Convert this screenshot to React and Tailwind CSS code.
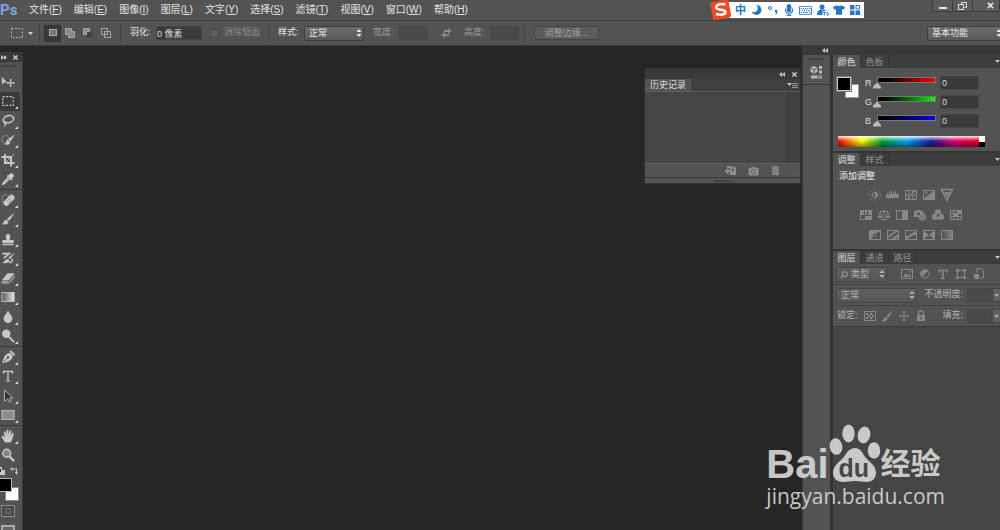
import { FaMoon, FaMicrophone, FaRegKeyboard, FaTshirt, FaCamera, FaTrashAlt } from 'react-icons/fa';

const uiFont = "font-['Liberation_Sans','Noto_Sans_CJK_SC',sans-serif]";
const fieldClass = 'border border-[#464646] bg-[#3a3a3a] text-[#dcdcdc] outline-none';
const fieldOffClass = 'border border-[#474747] bg-[#4a4a4a] outline-none';

const menus = [
  ['文件', 'F'],
  ['编辑', 'E'],
  ['图像', 'I'],
  ['图层', 'L'],
  ['文字', 'Y'],
  ['选择', 'S'],
  ['滤镜', 'T'],
  ['视图', 'V'],
  ['窗口', 'W'],
  ['帮助', 'H'],
];

const toolIcons = {
  move: (
    <>
      <path d="M1 2v9l2.500-2.500H7z" fill="currentColor" />
      <path d="M11 5v8M7 9h8M10 6l1-1 1 1M10 12l1 1 1-1M8 8L7 9l1 1M14 8l1 1-1 1" fill="none" stroke="currentColor" strokeWidth="1.200" />
    </>
  ),
  marquee: <rect x="2" y="3" width="12" height="10" fill="none" stroke="currentColor" strokeWidth="1.300" strokeDasharray="2.400 1.600" />,
  lasso: (
    <>
      <ellipse cx="8.500" cy="6" rx="6" ry="4" transform="rotate(-14 8.500 6)" fill="none" stroke="currentColor" strokeWidth="1.800" />
      <path d="M3.500 8.500c-1 1.500.2 2.600 1.500 1.800s-.2-2-1-1.400M5 10.500c.6 1.500-.2 3-1.600 3.500" fill="none" stroke="currentColor" strokeWidth="1.300" />
    </>
  ),
  quickSelect: (
    <>
      <circle cx="5.500" cy="7.500" r="4.500" fill="none" stroke="currentColor" strokeDasharray="1.500 1.300" />
      <path d="M16 1.500L11 9.500 8 7z" fill="currentColor" />
      <path d="M7.500 7.500L10.500 10.500c-.5 3-3.500 3.500-6.500 2.500C6.500 12 5.500 8.500 7.500 7.500z" fill="currentColor" />
    </>
  ),
  crop: (
    <>
      <path d="M4.500 1v10.500H15.500M.5 4.500h11V15.500" fill="none" stroke="currentColor" strokeWidth="2.200" />
      <path d="M5 11L14.500 1.500" stroke="currentColor" />
    </>
  ),
  eyedropper: (
    <>
      <path d="M9.500 2.500c2-2.500 6-.5 5 2.500L12.500 7.500l.8.8-1.500 1.500L6.500 4.500 8 3l1 1z" fill="currentColor" />
      <path d="M8.500 6l-5.500 6-1.500 2.500L4 13l6-5.500" fill="none" stroke="currentColor" strokeWidth="1.500" />
    </>
  ),
  heal: (
    <>
      <ellipse cx="5.500" cy="7" rx="4.500" ry="5" fill="none" stroke="currentColor" strokeDasharray="1.500 1.200" />
      <rect x="1.500" y="5" width="15" height="6.500" rx="3" transform="rotate(-45 9 8)" fill="currentColor" />
      <path d="M7 8.500l3 3M9 6.500l3 3" stroke="#666" strokeWidth=".8" />
    </>
  ),
  brush: (
    <>
      <path d="M16 .5L9.500 10 6.500 8z" fill="currentColor" />
      <path d="M6 8.800l2.700 2.200c-.5 3-4 4-8.200 2.800C3.500 13 3 9.500 6 8.800z" fill="currentColor" />
    </>
  ),
  stamp: <path d="M6 7.500C3 .5 13 .5 10 7.500V9h4.500v3.500h-13V9H6zM1.500 13.300h13V15h-13z" fill="currentColor" />,
  history: (
    <>
      <path d="M16 1.500L10.500 9.500 8 8z" fill="currentColor" />
      <path d="M7.500 9l2.500 2c-.5 2.500-4.500 3.500-9 2.500C3.500 13 4.500 9.500 7.500 9z" fill="currentColor" />
      <path d="M1.500 3h8L3 8.500M12.500 9c1 2-.5 4-3 4.500" fill="none" stroke="currentColor" strokeWidth="1.800" />
    </>
  ),
  eraser: (
    <>
      <path d="M7.500 2.500h8L9 10.500H1z" fill="currentColor" />
      <path d="M1 11.200h8v3.300H1zM10 11l5.500-7v3.500L10 14.500z" fill="#9b9b9b" />
    </>
  ),
  gradient: (
    <>
      <defs>
        <linearGradient id="tool-ramp">
          <stop stopColor="#555" />
          <stop offset="1" stopColor="#e4e4e4" />
        </linearGradient>
      </defs>
      <rect x="1" y="3" width="14" height="10" fill="url(#tool-ramp)" stroke="#cfcfcf" />
    </>
  ),
  blur: <path d="M8 .5c1 3.500 5 5.500 5 9.300a5 5 0 0 1-10 0C3 6 7 4 8 .5z" fill="currentColor" />,
  dodge: (
    <>
      <circle cx="6" cy="5.500" r="4.800" fill="currentColor" />
      <path d="M9 9l6 6" stroke="currentColor" strokeWidth="2.200" />
    </>
  ),
  pen: (
    <>
      <path d="M10 3l3.500 3.500c-1 5-4 7-12 8.500C3 8 5 4 10 3z" fill="currentColor" />
      <path d="M10.500 1L15.500 6" stroke="currentColor" strokeWidth="2.200" />
      <path d="M3 14l4.500-5" stroke="#444" />
      <circle cx="8" cy="8.500" r="1.300" fill="#444" />
    </>
  ),
  type: <path d="M2 2h12v3.500h-1c-.3-1.500-1-2.200-4.200-2.200V13l1.700.5v.8h-5v-.8l1.700-.5V3.300C4 3.300 3.300 4 3 5.500H2z" fill="currentColor" />,
  pathSelect: <path d="M4 1v13l3.500-2.700 2 4 2-1-2-4h4z" fill="#333" stroke="#bdbdbd" />,
  rect: <rect x="1" y="3" width="14" height="10" fill="#8b8b8b" stroke="#c8c8c8" />,
  hand: <path d="M4.500 15L1 9.500c-.5-1.500 1-1.800 1.800-.8L4.500 10 3.500 4c0-1.300 1.500-1.300 1.700 0L6.200 8l.3-6c.2-1.300 1.600-1.300 1.700 0L8.500 8l1.500-5.500c.4-1.200 1.700-.9 1.500.4L10.800 8.500l1.900-3.500c.7-1 1.900-.4 1.500.7L12.500 12l-1.500 3z" fill="currentColor" stroke="currentColor" strokeWidth=".6" />,
  zoom: (
    <>
      <circle cx="6.500" cy="6" r="4.500" fill="#858585" stroke="currentColor" strokeWidth="1.600" />
      <path d="M9.500 9.500L15 15" stroke="currentColor" strokeWidth="2.600" />
    </>
  ),
};

const toolGroups = [
  {
    height: 'h-[117px]',
    tools: [
      ['move', '移动工具'],
      ['marquee', '矩形选框工具'],
      ['lasso', '套索工具'],
      ['quickSelect', '快速选择工具'],
      ['crop', '裁剪工具'],
      ['eyedropper', '吸管工具'],
    ],
  },
  {
    height: 'h-[156px]',
    tools: [
      ['heal', '污点修复画笔工具'],
      ['brush', '画笔工具'],
      ['stamp', '仿制图章工具'],
      ['history', '历史记录画笔工具'],
      ['eraser', '橡皮擦工具'],
      ['gradient', '渐变工具'],
      ['blur', '模糊工具'],
      ['dodge', '减淡工具'],
    ],
  },
  {
    height: 'h-[78px]',
    tools: [
      ['pen', '钢笔工具'],
      ['type', '文字工具'],
      ['pathSelect', '路径选择工具'],
      ['rect', '矩形工具'],
    ],
  },
  {
    height: 'h-[39px]',
    tools: [
      ['hand', '抓手工具'],
      ['zoom', '缩放工具'],
    ],
  },
];

const channels = [
  { name: 'R', bar: 'bg-linear-to-r from-black to-[#ff0000]' },
  { name: 'G', bar: 'bg-linear-to-r from-black to-[#00ff00]' },
  { name: 'B', bar: 'bg-linear-to-r from-black to-[#0000ff]' },
];

const frame = <rect x="1.500" y="2.500" width="11" height="9" fill="none" stroke="currentColor" />;

const adjustments = [
  [
    ['亮度/对比度', <><circle cx="7" cy="7" r="2.800" fill="none" stroke="currentColor" /><path d="M7 4.200a2.800 2.800 0 0 1 0 5.600z" fill="currentColor" /><path d="M7 .5v2M7 11.500v2M.5 7h2M11.500 7h2M2.500 2.500l1.300 1.300M10.200 10.200l1.300 1.300M2.500 11.500l1.300-1.300M10.200 3.800l1.300-1.300" stroke="currentColor" /></>],
    ['色阶', <path d="M0 10V7h1V5h1v2h1V4h1v2h1V3h1v3h1V4h1v2h1V3h1v3h1V5h1v2h1v3z" fill="currentColor" />],
    ['曲线', <>{frame}<path d="M2 11C8 11 6 3 12 3M5 3v8M9 3v8M2 7h10" fill="none" stroke="currentColor" /></>],
    ['曝光度', <>{frame}<path d="M2 11L12 3v8zM3 5h3M4.500 3.500v3" fill="currentColor" stroke="currentColor" strokeWidth=".8" /></>],
    ['自然饱和度', <><path d="M1.500 1.500h11L7 12.500z" fill="none" stroke="currentColor" strokeWidth="1.500" /><path d="M4 4h6L7 10z" fill="currentColor" /></>],
  ],
  [
    ['色相/饱和度', <>{frame}<path d="M2 3h3v4H2zM6 3h2v4H6zM9 3h3v4H9zM6 8h6v3H6z" fill="currentColor" /></>],
    ['色彩平衡', <path d="M7 1.500v9M3 3.500h8M4 11.500h6M3 4l-2 4.500h4zM11 4L9 8.500h4zM1 9.500h4M9 9.500h4" fill="none" stroke="currentColor" />],
    ['黑白', <>{frame}<path d="M7 3h5.500v8.500H7z" fill="currentColor" /></>],
    ['照片滤镜', <><path d="M1 3h2l1-1h3l1 1h2v6H1z" fill="currentColor" /><circle cx="5.500" cy="5.800" r="1.600" fill="#535353" /><circle cx="9.500" cy="9" r="3.300" fill="#777" stroke="currentColor" /></>],
    ['通道混合器', <><circle cx="7" cy="4.500" r="3.300" fill="currentColor" /><circle cx="4.300" cy="8.800" r="3.300" fill="currentColor" /><circle cx="9.700" cy="8.800" r="3.300" fill="currentColor" /><path d="M7 5l2 3.500H5z" fill="#535353" /></>],
    ['颜色查找', <>{frame}<path d="M4.500 2.500v9M8.500 2.500v9M1.500 5.500h11M1.500 8.500h11" stroke="currentColor" /><path d="M5 6h3v2H5zM9 3h3v2H9z" fill="currentColor" /></>],
  ],
  [
    ['反相', <>{frame}<path d="M2 11V3h10l-4 2.500A2.500 2.500 0 0 0 5 9z" fill="currentColor" /><path d="M9 6a2.500 2.500 0 0 1-3 3z" fill="currentColor" /></>],
    ['色调分离', <>{frame}<path d="M2 8l7-5h3L2 10zM5 11l7-5v3l-3 2z" fill="currentColor" /></>],
    ['阈值', <>{frame}<path d="M2 8c3 1 5-4 10-4v3c-4-.5-6 3-10 4z" fill="currentColor" /></>],
    ['可选颜色', <>{frame}<path d="M2 3v8l5-4zM12 3v8L7 7z" fill="currentColor" /></>],
    ['渐变映射', <><defs><linearGradient id="map-ramp"><stop stopColor="#505050" /><stop offset="1" stopColor="#858585" /></linearGradient></defs><rect x="1.500" y="2.500" width="11" height="9" fill="url(#map-ramp)" stroke="currentColor" /></>],
  ],
];

const layerFilters = [
  ['像素图层', <>{frame}<path d="M3 10l2.500-4 2 2.500L9 7l2 3z" fill="currentColor" /><path d="M9 4h2v1.500H9z" fill="currentColor" /></>],
  ['调整图层', <><circle cx="7" cy="7" r="4.500" fill="currentColor" /><path d="M10.200 3.800a4.500 4.500 0 0 1-6.400 6.400z" fill="#565656" /><circle cx="7" cy="7" r="4.200" fill="none" stroke="currentColor" /></>],
  ['文字图层', <path d="M2.500 2.500h9v3h-1c-.3-1.300-.7-1.800-2.700-1.800V11l1.400.3v.7H4.800v-.7L6.200 11V3.700C4.200 3.700 3.800 4.200 3.500 5.500h-1z" fill="currentColor" />],
  ['形状图层', <path d="M3.500 3.500h7v7h-7zM2.500 2.500h2v2h-2zM9.500 2.500h2v2h-2zM2.500 9.500h2v2h-2zM9.500 9.500h2v2h-2z" fill="none" stroke="currentColor" />],
  ['智能对象', <><path d="M5 6V1.500h4L11.500 4v7H8" fill="none" stroke="currentColor" /><path d="M2 7h5v5H2z" fill="currentColor" /></>],
];

const locks = [
  ['锁定透明像素', <>{frame}<path d="M3 4h2v2H3zM7 4h2v2H7zM5 6h2v2H5zM9 6h2v2H9zM3 8h2v2H3zM7 8h2v2H7z" fill="currentColor" /></>],
  ['锁定图像像素', <><path d="M13.500 1L8 9 6 7.300z" fill="currentColor" /><path d="M5.500 8l2 1.700C7 12.500 4 13 1 12c2.500-.5 2.500-3.500 4.500-4z" fill="currentColor" /></>],
  ['锁定位置', <path d="M7 2v10M2 7h10M5.500 3.500L7 2l1.500 1.500M5.500 10.500L7 12l1.500-1.500M3.500 5.500L2 7l1.500 1.500M10.500 5.500L12 7l-1.500 1.500" fill="none" stroke="currentColor" />],
  ['锁定全部', <><path d="M4.500 6.500V4.500a2.500 2.500 0 0 1 5 0v2" fill="none" stroke="currentColor" strokeWidth="1.400" /><path d="M3 6h8v6H3zM6.300 8v2.500h1.400V8z" fill="currentColor" fillRule="evenodd" /></>],
];

function SmallIcon({ label, width = 'w-[18px]', children }) {
  return (
    <button type="button" aria-label={label} className={`flex items-center justify-center text-[#888] ${width}`}>
      <svg viewBox="0 0 14 14" className="h-3.5 w-3.5 shrink-0">{children}</svg>
    </button>
  );
}

function UpDown() {
  return (
    <svg viewBox="0 0 6 8" className="pointer-events-none absolute inset-y-0 right-0.5 my-auto h-2 w-1.5">
      <path d="M3 0l2.500 3h-5zM3 8L.5 5h5z" fill="currentColor" />
    </svg>
  );
}

function Picker({ label, value, className, pad = 'pl-1', dim }) {
  const tone = dim
    ? 'text-[#b4b4b4] [&>select]:border-[#454545] [&>select]:from-[#606060] [&>select]:to-[#565656]'
    : 'text-[#e6e6e6] [&>select]:border-[#3d3d3d] [&>select]:from-[#6c6c6c] [&>select]:to-[#5a5a5a]';
  return (
    <div className={`relative shrink-0 ${tone} ${className}`}>
      <select
        aria-label={label}
        className={`block h-full w-full appearance-none rounded-xs border bg-linear-to-b text-[9px] leading-3 outline-none ${pad}`}
      >
        <option>{value}</option>
      </select>
      <UpDown />
    </div>
  );
}

function Chevrons({ flip }) {
  return (
    <svg viewBox="0 0 6 5" className={`h-[5px] w-1.5 ${flip ? 'rotate-180' : ''}`}>
      <path d="M3 0v5L0 2.500zM6 0v5L3 2.500z" fill="#c4c4c4" />
    </svg>
  );
}

function Cross() {
  return (
    <svg viewBox="0 0 6 6" className="h-[5px] w-[5px]">
      <path d="M.5.5l5 5M5.500.5l-5 5" stroke="#d0d0d0" strokeWidth="1.500" />
    </svg>
  );
}

function Grip() {
  return <div className="h-0.5 w-[15px] border-y border-dotted border-[#333]" />;
}

function Divider() {
  return <div className="mx-[5px] h-[17px] w-px shrink-0 bg-[#404040]" />;
}

function TabBar({ tabs }) {
  return (
    <div className="flex h-[13px] items-stretch bg-[#3d3d3d] text-[9px] leading-3">
      {tabs.map((tab, i) => (
        <button
          key={tab}
          type="button"
          className={`w-7 border-r border-[#333] text-center ${i === 0 ? 'bg-[#535353] text-[#dedede]' : 'text-[#929292]'}`}
        >
          {tab}
        </button>
      ))}
      <button type="button" aria-label="面板菜单" className="ml-auto flex w-[5px] items-center overflow-hidden">
        <svg viewBox="0 0 5 3" className="h-[3px] w-[5px]"><path d="M0 0h5L2.500 3z" fill="#c4c4c4" /></svg>
      </button>
    </div>
  );
}

function InputMethodBar() {
  return (
    <div className="mr-[68px] ml-auto flex items-center">
      <svg viewBox="0 0 22 20" className="z-10 h-5 w-[22px]">
        <rect x="1.500" y=".5" width="18.500" height="18.500" rx="2.500" transform="rotate(-10 11 10)" fill="#ef4b23" />
        <path d="M15.500 4.500C11 3.300 6 4.300 6.200 7.500c.3 3.500 9.300 1 9.300 4.500 0 2.800-5.500 3.300-9.500 2" fill="none" stroke="#fff" strokeWidth="2.500" />
      </svg>
      <div className="-ml-1 flex h-4 items-center bg-white pr-px pl-1 text-[#2475c4]">
        <span className="w-[17px] text-center text-[11px] leading-4 font-bold">中</span>
        <span className="flex w-4 justify-center"><FaMoon className="h-2.5 w-2.5 -scale-x-100 rotate-12" /></span>
        <svg viewBox="0 0 16 12" className="h-3 w-4">
          <circle cx="5" cy="4" r="1.500" fill="none" stroke="currentColor" />
          <path d="M10 6c2-1 3 .5 2.300 2.200C12 9.500 11 10.500 10 11c.7-1 1-1.500.8-2.500-.8 0-1.300-1.500-.8-2.500z" fill="currentColor" />
        </svg>
        <span className="flex w-4 justify-center"><FaMicrophone className="h-3 w-3" /></span>
        <span className="flex w-[17px] justify-center"><FaRegKeyboard className="h-[13px] w-[13px]" /></span>
        <svg viewBox="0 0 17 14" className="h-3.5 w-[17px]">
          <circle cx="8" cy="4" r="2.500" fill="currentColor" />
          <path d="M3 12c0-4 2-5.500 5-5.500 2 0 3.500 0 4.500 1.500H8.500v4z" fill="currentColor" />
          <path d="M9 9.500h3M10.500 9.500v3M13 12.500v-3c2.500 0 2.500 3 0 3z" fill="none" stroke="currentColor" strokeWidth=".8" />
        </svg>
        <span className="flex w-4 justify-center"><FaTshirt className="h-3 w-3" /></span>
        <svg viewBox="0 0 16 12" className="h-3 w-4">
          <path d="M3 1h4.500v4.500H3zM3 6.500h4.500V11H3zM8.500 6.500H13V11H8.500z" fill="currentColor" />
          <path d="M9 1.500h3.500V5H9z" fill="none" stroke="currentColor" />
        </svg>
      </div>
    </div>
  );
}

function MenuBar() {
  return (
    <header className="flex h-5 shrink-0 items-center bg-[#535353] text-[10px] text-[#e4e4e4]">
      <span className="w-[29px] font-[Roboto,sans-serif] text-[15px] leading-5 font-bold text-[#7ba7dc]">Ps</span>
      <nav className="flex gap-3">
        {menus.map(([name, key]) => (
          <button key={key} type="button" className="leading-5 whitespace-nowrap">
            {name}(<u>{key}</u>)
          </button>
        ))}
      </nav>
      <InputMethodBar />
      <div className="flex h-3 shrink-0 self-start rounded-b-xs border border-t-0 border-[#3b3b3b] bg-[#5b5b5b]">
        <button type="button" aria-label="最小化" className="flex w-5 items-center justify-center border-r border-[#3b3b3b]">
          <svg viewBox="0 0 8 8" className="h-2 w-2"><path d="M0 5h8v2H0z" fill="#e4e4e4" /></svg>
        </button>
        <button type="button" aria-label="还原" className="flex w-5 items-center justify-center border-r border-[#3b3b3b]">
          <svg viewBox="0 0 9 8" className="h-2 w-[9px]"><path d="M3.500 2.500v-2h5v5h-2M.5 2.500h5v5h-5z" fill="none" stroke="#e4e4e4" /></svg>
        </button>
        <button type="button" aria-label="关闭" className="flex w-[26px] items-center justify-center pl-2">
          <svg viewBox="0 0 8 8" className="h-[7px] w-[7px]"><path d="M1 1l6 6M7 1L1 7" stroke="#e4e4e4" strokeWidth="1.800" /></svg>
        </button>
      </div>
    </header>
  );
}

function OptionsBar() {
  return (
    <div className="flex h-[25px] shrink-0 items-center border-t border-[#3e3e3e] bg-[#535353] text-[9px] text-[#e6e6e6]">
      <button type="button" aria-label="工具预设" className="ml-2 flex w-[27px] items-center gap-1 pl-0.5">
        <svg viewBox="0 0 14 14" className="h-3.5 w-3.5"><rect x="1.500" y="2.500" width="11" height="9" fill="none" stroke="#b5b5b5" strokeDasharray="2 1.500" /></svg>
        <svg viewBox="0 0 5 3" className="h-[3px] w-[5px]"><path d="M0 0h5L2.500 3z" fill="#d5d5d5" /></svg>
      </button>
      <div className="ml-1 h-[17px] w-px bg-[#404040]" />
      <div className="ml-1 flex text-[#a8a8a8]">
        <button type="button" aria-label="新选区" className="flex h-[17px] w-[17px] items-center justify-center rounded-xs border border-[#303030] bg-[#393939]">
          <svg viewBox="0 0 10 10" className="h-2.5 w-2.5"><rect x="1.500" y="1.500" width="7" height="6" fill="#777" stroke="currentColor" /></svg>
        </button>
        <button type="button" aria-label="添加到选区" className="flex w-[18px] items-center justify-center">
          <svg viewBox="0 0 10 10" className="h-2.5 w-2.5"><path d="M.5.5h6v3h3v6h-6v-3h-3z" fill="#888" stroke="currentColor" /></svg>
        </button>
        <button type="button" aria-label="从选区减去" className="flex w-[18px] items-center justify-center">
          <svg viewBox="0 0 10 10" className="h-2.5 w-2.5"><path d="M.5.5h6v3h-3v3h-3z" fill="#888" stroke="currentColor" /><path d="M4 4h5.500v5.500H4z" fill="#424242" /></svg>
        </button>
        <button type="button" aria-label="与选区交叉" className="flex w-[18px] items-center justify-center">
          <svg viewBox="0 0 10 10" className="h-2.5 w-2.5"><path d="M.5.5h6v6h-6zM3.500 3.500h6v6h-6z" fill="none" stroke="currentColor" /></svg>
        </button>
      </div>
      <Divider />
      <label className="ml-1 flex shrink-0 items-center gap-0.5">
        <span className="w-6">羽化:</span>
        <input defaultValue="0 像素" className={`h-3.5 w-[46px] ${fieldClass}`} />
      </label>
      <label className="ml-2 flex shrink-0 items-center gap-[5px] text-[#8c8c8c]">
        <input type="checkbox" disabled className="h-[9px] w-[9px] appearance-none rounded-xs border border-[#464646] bg-[#5e5e5e]" />
        消除锯齿
      </label>
      <div className="mr-2 ml-[9px] h-[17px] w-px shrink-0 bg-[#404040]" />
      <span className="w-[26px] shrink-0">样式:</span>
      <Picker label="样式" value="正常" className="h-[15px] w-[60px]" />
      <label className="ml-[9px] flex shrink-0 items-center gap-0.5 text-[#9a9a9a]">
        <span className="w-6">宽度:</span>
        <input disabled className={`h-3.5 w-[29px] ${fieldOffClass}`} />
      </label>
      <button type="button" aria-label="高度和宽度互换" className="flex w-9 shrink-0 justify-center text-[#888]">
        <svg viewBox="0 0 11 10" className="h-2.5 w-[11px]"><path d="M3 2h4V0l4 3-4 3V4H3zM8 8H4v2L0 7l4-3v2h4z" fill="currentColor" /></svg>
      </button>
      <label className="flex shrink-0 items-center gap-0.5 text-[#9a9a9a]">
        <span className="w-6">高度:</span>
        <input disabled className={`h-3.5 w-[29px] ${fieldOffClass}`} />
      </label>
      <Divider />
      <button type="button" disabled className="ml-1 h-3.5 w-[65px] shrink-0 rounded-xs border border-[#444] bg-[#5c5c5c] leading-3 text-[#a0a0a0]">
        调整边缘...
      </button>
      <Picker label="工作区" value="基本功能" className="-mr-1 ml-auto h-[15px] w-[77px]" />
    </div>
  );
}

function Toolbox() {
  return (
    <aside className="mt-1.5 flex w-[23px] shrink-0 flex-col border-r border-[#3a3a3a] bg-[#535353]">
      <div className="flex h-2.5 shrink-0 items-center justify-between bg-[#383838] pr-1 pl-px">
        <Chevrons flip />
        <Cross />
      </div>
      <div className="flex h-2.5 shrink-0 items-start pt-[3px] pl-px"><Grip /></div>
      {toolGroups.map((group, i) => (
        <div key={group.height} className={`flex shrink-0 flex-col ${i > 0 ? 'border-t border-[#383838]' : ''}`}>
          <div className={`flex flex-col ${group.height}`}>
            {group.tools.map(([id, label]) => (
              <button
                key={id}
                type="button"
                aria-label={label}
                className={`flex flex-1 items-center pl-px text-[#c8c8c8] ${id === 'marquee' ? 'mr-0.5 rounded-xs bg-[#3a3a3a]' : ''}`}
              >
                <svg viewBox="0 0 16 16" className="h-3.5 w-3.5 shrink-0">{toolIcons[id]}</svg>
                {id !== 'move' && id !== 'zoom' && (
                  <svg viewBox="0 0 3 3" className="mb-0.5 h-[3px] w-[3px] self-end"><path d="M3 0v3H0z" fill="#e0e0e0" /></svg>
                )}
              </button>
            ))}
          </div>
        </div>
      ))}
      <div className="flex h-3 shrink-0 items-center justify-between pr-1">
        <svg viewBox="0 0 5 8" className="h-2 w-[5px]"><path d="M0 0h2v3h3v5H0z" fill="#c8c8c8" /><path d="M0 2h1v3H0z" fill="#222" /></svg>
        <svg viewBox="0 0 8 8" className="h-2 w-2"><path d="M2.500 0v1.500H7V5h1L6.500 8 5 5h1V2.500H2.500V4L0 2z" fill="#c3c3c3" /></svg>
      </div>
      <div className="grid h-6 w-[19px] shrink-0 grid-cols-1 grid-rows-1">
        <button type="button" aria-label="背景色" className="col-start-1 row-start-1 h-3.5 w-3.5 self-end justify-self-end border border-[#888] bg-white" />
        <button type="button" aria-label="前景色" className="col-start-1 row-start-1 mt-px h-3.5 w-3 border border-l-0 border-[#bbb] bg-black" />
      </div>
      <div className="flex shrink-0 flex-col gap-2 pt-1 pl-px">
        <button type="button" aria-label="快速蒙版" className="flex h-3 w-3.5 items-center justify-center border border-[#8c8c8c] bg-[#4a4a4a]">
          <span className="h-1.5 w-1.5 rounded-full border border-dotted border-[#aaa]" />
        </button>
        <button type="button" aria-label="屏幕模式" className="h-3 w-3.5 border-2 border-[#aaa] bg-[#666]" />
      </div>
    </aside>
  );
}

function HistoryPanel() {
  return (
    <section className="absolute top-[22px] right-0 w-[157px] rounded-t-xs border border-[#303030] bg-[#535353]">
      <div className="flex h-2.5 items-center justify-end gap-[7px] bg-[#393939] pr-[3px]">
        <Chevrons />
        <Cross />
      </div>
      <div className="flex h-[13px] items-stretch border-b border-[#5f5f5f] bg-[#3f3f3f]">
        <h2 className="w-[46px] bg-[#535353] text-center text-[9px] leading-3 text-[#dcdcdc]">历史记录</h2>
        <button type="button" aria-label="面板菜单" className="mr-0.5 ml-auto">
          <svg viewBox="0 0 11 7" className="h-[7px] w-[11px]"><path d="M0 1h5L2.500 4z" fill="#c4c4c4" /><path d="M5 1.500h6M5 3.500h6M5 5.500h6" stroke="#999" /></svg>
        </button>
      </div>
      <div className="flex h-[71px] justify-end bg-[#454545]">
        <div className="w-3 border-l border-[#383838] bg-[#404040]" />
      </div>
      <div className="flex h-3.5 items-center justify-end border-t border-[#606060] text-[#8d8d8d]">
        <button type="button" aria-label="从当前状态创建新文档" className="mr-3">
          <svg viewBox="0 0 11 9" className="h-[9px] w-[11px]"><path d="M2 0h4l1 1.500L8.500 0 11 2v7H5V6H3.500v2h-2V6H0V4h1.500V2.500h2V4H5V2H2z" fill="currentColor" /><path d="M6 4h3M7.500 2.500v3" stroke="#555" /></svg>
        </button>
        <button type="button" aria-label="创建新快照" className="mr-3"><FaCamera className="h-2.5 w-[11px]" /></button>
        <button type="button" aria-label="删除当前状态" className="mr-3"><FaTrashAlt className="h-[9px] w-[9px]" /></button>
        <svg viewBox="0 0 8 8" className="h-2 w-2 self-end"><path d="M8 0v8H0zM8 3L3 8M8 6L6 8" fill="#626262" stroke="#4a4a4a" /></svg>
      </div>
      <div className="flex h-1.5 items-center justify-center border-t border-[#3a3a3a]"><Grip /></div>
    </section>
  );
}

function ColorPanel() {
  return (
    <section>
      <TabBar tabs={['颜色', '色板']} />
      <div className="h-[83px] px-1 pt-[5px]">
        <div className="flex">
          <div className="mt-1 grid h-[21px] w-[22px] shrink-0">
            <button type="button" aria-label="背景色" className="col-start-1 row-start-1 h-3.5 w-3.5 self-end justify-self-end border border-[#999] bg-white" />
            <button type="button" aria-label="前景色" className="col-start-1 row-start-1 h-3.5 w-3.5 border border-[#ccc] bg-black outline outline-[#777]" />
          </div>
          <div className="ml-1.5">
            {channels.map(({ name, bar }) => (
              <div key={name} className="flex h-[19px] items-center">
                <label htmlFor={`channel-${name}`} className="w-2 text-[9px] leading-4 text-[#dcdcdc]">{name}</label>
                <div className="w-[67px]">
                  <div className="mx-1 border border-[#777]">
                    <div className={`h-1 ${bar}`} />
                  </div>
                  <input
                    type="range"
                    min="0"
                    max="255"
                    defaultValue="0"
                    aria-label={`${name} 滑块`}
                    className="block h-1.5 w-full appearance-none bg-transparent [&::-webkit-slider-thumb]:h-1.5 [&::-webkit-slider-thumb]:w-2 [&::-webkit-slider-thumb]:appearance-none [&::-webkit-slider-thumb]:bg-[#bbb] [&::-webkit-slider-thumb]:[clip-path:polygon(50%_0,100%_70%,100%_100%,0_100%,0_70%)]"
                  />
                </div>
                <input id={`channel-${name}`} defaultValue="0" className={`h-3.5 w-[39px] px-px text-[9px] ${fieldClass}`} />
              </div>
            ))}
          </div>
        </div>
        <div className="mt-1.5 mr-[11px] ml-px flex h-[11px]">
          <div className="flex-1 bg-[linear-gradient(to_bottom,rgba(255,255,255,.9),transparent_45%,rgba(0,0,0,.45)),linear-gradient(to_right,#f00,#ff0_17%,#00a040_32%,#00a8f0_49%,#1c1c98_66%,#e2007a_82%,#e8001c)]" />
          <div className="flex w-1.5 flex-col"><div className="flex-1 bg-white" /><div className="flex-1 bg-black" /></div>
        </div>
      </div>
    </section>
  );
}

function AdjustmentsPanel() {
  return (
    <section className="border-t-2 border-[#333]">
      <TabBar tabs={['调整', '样式']} />
      <div className="h-[83px] pt-1">
        <h3 className="pl-1.5 text-[9px] leading-3 text-[#f0f0f0]">添加调整</h3>
        <div className="mt-[3px] flex flex-col pr-3">
          {adjustments.map((row) => (
            <div key={row[0][0]} className="flex h-5 justify-center">
              {row.map(([label, icon]) => <SmallIcon key={label} label={label}>{icon}</SmallIcon>)}
            </div>
          ))}
        </div>
      </div>
    </section>
  );
}

function PercentField({ label }) {
  return (
    <label className="ml-auto flex items-center gap-1 text-[#b5b5b5]">
      {label}:
      <span className="flex h-3.5">
        <input disabled className={`w-[25px] ${fieldOffClass}`} />
        <span className="flex w-2 items-center justify-center border border-r-0 border-[#444] bg-[#606060]">
          <svg viewBox="0 0 5 3" className="h-[3px] w-[5px]"><path d="M0 0h5L2.500 3z" fill="#aaa" /></svg>
        </span>
      </span>
    </label>
  );
}

function LayersPanel() {
  return (
    <section className="flex flex-1 flex-col border-t-2 border-[#333] text-[9px]">
      <TabBar tabs={['图层', '通道', '路径']} />
      <div className="flex h-5 shrink-0 items-center pl-[3px]">
        <div className="relative">
          <Picker dim label="图层过滤" value="类型" className="h-[15px] w-[51px]" pad="pl-3.5" />
          <svg viewBox="0 0 8 8" className="pointer-events-none absolute top-1 left-1 h-2 w-2"><circle cx="4.800" cy="3.200" r="2.500" fill="none" stroke="#aaa" /><path d="M3 5L.5 7.500" stroke="#aaa" /></svg>
        </div>
        <div className="ml-[11px] flex">
          {layerFilters.map(([label, icon]) => <SmallIcon key={label} label={label}>{icon}</SmallIcon>)}
        </div>
      </div>
      <div className="flex h-[21px] shrink-0 items-center border-t border-[#434343] pl-[3px]">
        <Picker dim label="混合模式" value="正常" className="h-[15px] w-[81px]" />
        <PercentField label="不透明度" />
      </div>
      <div className="flex h-[21px] shrink-0 items-center border-t border-[#434343] pl-1 text-[#b5b5b5]">
        <span className="w-6">锁定:</span>
        <div className="flex">
          {locks.map(([label, icon]) => <SmallIcon key={label} label={label} width="w-[17px]">{icon}</SmallIcon>)}
        </div>
        <PercentField label="填充" />
      </div>
      <div className="flex-1 border-t border-[#3a3a3a] bg-[#454545]" />
    </section>
  );
}

function Dock() {
  return (
    <aside className="flex w-[199px] shrink-0 flex-col border-l-2 border-[#333] bg-[#535353]">
      <div className="flex h-[9px] shrink-0 items-center bg-[#393939] pl-[19px]"><Chevrons /></div>
      <div className="flex flex-1">
        <div className="w-[27px] shrink-0">
          <div className="flex h-[30px] flex-col items-center gap-1.5 border-b border-[#383838] pt-[3px]">
            <Grip />
            <button type="button" aria-label="属性">
              <svg viewBox="0 0 13 13" className="h-[13px] w-[13px] text-[#b8b8b8]">
                <path d="M4 0l3.500 1.800v4L4 8 .5 5.800v-4z" fill="currentColor" />
                <path d="M.8 2.200L4 3.800l3.200-1.600M4 3.800v3.500" fill="none" stroke="#555" />
                <path d="M9 0h3v3H9zM9 4.500h3v3H9zM1 9.500h11v3H1z" fill="currentColor" />
                <path d="M7 11h4" stroke="#555" />
              </svg>
            </button>
          </div>
        </div>
        <div className="flex flex-1 flex-col border-l-3 border-[#333]">
          <ColorPanel />
          <AdjustmentsPanel />
          <LayersPanel />
        </div>
      </div>
    </aside>
  );
}

function Watermark() {
  return (
    <div className="pointer-events-none absolute right-[55px] bottom-5 text-[#d8d8d8] opacity-90">
      <div className="flex items-end">
        <span className="text-[40px] leading-9 font-bold">Bai</span>
        <div className="relative h-[58px] w-[52px]">
          <svg viewBox="0 0 52 58" className="h-full w-full">
            <g fill="currentColor">
              <ellipse cx="7" cy="22.500" rx="6.300" ry="8.300" transform="rotate(-8 7 22.500)" />
              <ellipse cx="19.500" cy="9.500" rx="6.200" ry="9" />
              <ellipse cx="35" cy="11" rx="6.300" ry="8.500" transform="rotate(12 35 11)" />
              <ellipse cx="45" cy="26.500" rx="6.300" ry="8.300" />
              <path d="M26 24c5 0 7 4 9 7.500 3 5 12 9 12 17 0 6-4 9.500-9 9.500-4 0-8-1-12-1s-8 1-12 1c-6 0-10-3.500-10-9.500 0-8 9-12 12-17 2-3.500 5-7.500 10-7.500z" />
            </g>
          </svg>
          <span className="absolute bottom-0.5 left-2.5 text-[25px] leading-6 font-bold text-[#484848]">du</span>
        </div>
        <span className="text-[30px] leading-9 font-bold">经验</span>
      </div>
      <div className="font-['Open_Sans',sans-serif] text-[21px] leading-7">jingyan.baidu.com</div>
    </div>
  );
}

export default function App() {
  return (
    <div className={`relative flex h-screen flex-col overflow-hidden bg-[#262626] ${uiFont}`}>
      <MenuBar />
      <OptionsBar />
      <div className="flex min-h-0 flex-1 border-t border-[#3a3a3a]">
        <Toolbox />
        <main className="relative flex-1">
          <HistoryPanel />
        </main>
        <Dock />
      </div>
      <Watermark />
    </div>
  );
}
